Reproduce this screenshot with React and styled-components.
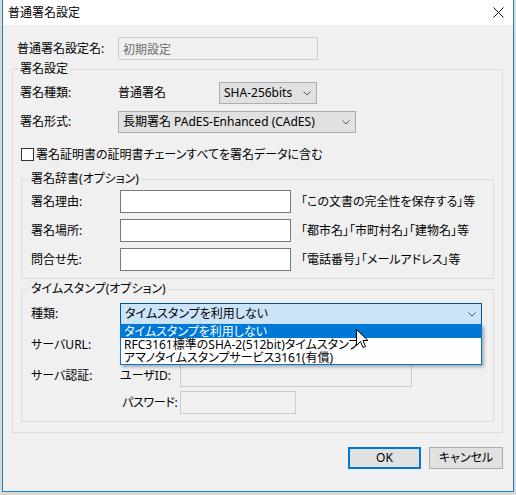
import { createGlobalStyle, styled } from "styled-components";

const GlobalStyle = createGlobalStyle`
  html, body {
    margin: 0;
    padding: 0;
    background: #d9d9d9;
  }
  body {
    font-family: "Noto Sans", "Noto Sans CJK JP", sans-serif;
    font-size: 12px;
    font-feature-settings: "palt";
    color: #000;
  }
`;

const Screen = styled.div`
  padding-left: 2px;
  height: 495px;
`;

const Window = styled.div`
  width: 512px;
  height: 492px;
  box-sizing: border-box;
  border: 1px solid #1883d7;
  border-top: none;
  background: #f0f0f0;
  display: flex;
  flex-direction: column;
`;

const TitleBar = styled.div`
  height: 25px;
  background: #fff;
  display: flex;
  align-items: center;
  padding-left: 5px;
`;

const Title = styled.span`
  flex: 1;
  line-height: 16px;
`;

const CloseBox = styled.div`
  width: 30px;
  height: 25px;
  display: flex;
  align-items: center;
  justify-content: center;
`;

const Body = styled.div`
  padding: 12px 10px 0 9px;
  display: flex;
  flex-direction: column;
`;

const Row = styled.div`
  display: flex;
  align-items: center;
  height: ${(p) => p.$h || 23}px;
  margin-top: ${(p) => p.$mt || 0}px;
  padding-left: ${(p) => p.$pl || 0}px;
`;

const Label = styled.span`
  width: ${(p) => p.$w}px;
  flex: none;
  white-space: nowrap;
  line-height: 16px;
  letter-spacing: ${(p) => p.$ls || 0}px;
`;

const Text = styled.span`
  white-space: nowrap;
  line-height: 16px;
  margin-left: ${(p) => p.$ml || 0}px;
`;

const Input = styled.div`
  box-sizing: border-box;
  width: ${(p) => p.$w}px;
  height: 23px;
  flex: none;
  border: 1px solid ${(p) => (p.$disabled ? "#cccccc" : "#7a7a7a")};
  background: ${(p) => (p.$disabled ? "#f0f0f0" : "#fff")};
  color: #6d6d6d;
  display: flex;
  align-items: center;
  padding-left: 4px;
`;

const Select = styled.div`
  box-sizing: border-box;
  width: ${(p) => p.$w}px;
  height: 22px;
  flex: none;
  border: 1px solid ${(p) => (p.$open ? "#005499" : "#adadad")};
  background: ${(p) => (p.$open ? "#cce4f7" : "#e1e1e1")};
  display: flex;
  align-items: center;
  padding: 0 5px 0 4px;
  white-space: nowrap;
`;

const SelectText = styled.span`
  flex: 1;
  line-height: 16px;
`;

const Group = styled.fieldset`
  margin: ${(p) => p.$mt || 0}px 0 0 ${(p) => p.$ml || 0}px;
  padding: ${(p) => p.$pad};
  border: 1px solid #dcdcdc;
  min-width: 0;
  display: flex;
  flex-direction: column;
`;

const Legend = styled.legend`
  padding: 0 2px;
  margin-left: -2px;
  line-height: 16px;
  white-space: nowrap;
`;

const CheckBox = styled.span`
  box-sizing: border-box;
  width: 13px;
  height: 13px;
  border: 1px solid #333;
  background: #fff;
  margin-left: 1px;
  flex: none;
`;

const DropWrap = styled.div`
  position: relative;
`;

const DropList = styled.div`
  position: absolute;
  left: 0;
  top: 21px;
  width: 362px;
  box-sizing: border-box;
  border: 1px solid #0078d7;
  background: #fff;
  box-shadow: 2px 2px 3px rgba(0, 0, 0, 0.3);
  z-index: 2;
`;

const DropItem = styled.div`
  height: 13px;
  line-height: 13px;
  padding-left: 3px;
  white-space: nowrap;
  background: ${(p) => (p.$active ? "#0078d7" : "#fff")};
  color: ${(p) => (p.$active ? "#fff" : "#000")};
`;

const Pointer = styled.svg`
  position: absolute;
  left: 236px;
  top: 26px;
  z-index: 3;
`;

const Buttons = styled.div`
  display: flex;
  justify-content: flex-end;
  gap: 8px;
  margin-top: 14px;
`;

const Button = styled.div`
  box-sizing: border-box;
  width: ${(p) => p.$w}px;
  height: 22px;
  background: #e1e1e1;
  border: ${(p) => (p.$primary ? "2px solid #0078d7" : "1px solid #adadad")};
  display: flex;
  align-items: center;
  justify-content: center;
  line-height: 16px;
`;

const Chevron = () => (
  <svg width="8" height="5" viewBox="0 0 8 5">
    <polyline points="0.5,0.5 4,4 7.5,0.5" fill="none" stroke="#555" strokeWidth="1" />
  </svg>
);

const timestampOptions = [
  "タイムスタンプを利用しない",
  "RFC3161標準のSHA-2(512bit)タイムスタンプ",
  "アマノタイムスタンプサービス3161(有償)",
];

const reasonRows = [
  { label: "署名理由:", hint: "「この文書の完全性を保存する」等" },
  { label: "署名場所:", hint: "「都市名」「市町村名」「建物名」等" },
  { label: "問合せ先:", hint: "「電話番号」「メールアドレス」等" },
];

export default function App() {
  return (
    <Screen>
      <GlobalStyle />
      <Window>
        <TitleBar>
          <Title>普通署名設定</Title>
          <CloseBox>
            <svg width="11" height="11" viewBox="0 0 11 11">
              <path d="M0.5 0.5 L10.5 10.5 M10.5 0.5 L0.5 10.5" stroke="#111" strokeWidth="1" />
            </svg>
          </CloseBox>
        </TitleBar>
        <Body>
          <Row $pl={5}>
            <Label $w={101}>普通署名設定名:</Label>
            <Input $w={200} $disabled>初期設定</Input>
          </Row>

          <Group $mt={1} $pad="5px 8px 10px 7px">
            <Legend>署名設定</Legend>
            <Row $h={22}>
              <Label $w={98}>署名種類:</Label>
              <Label $w={101}>普通署名</Label>
              <Select $w={98}>
                <SelectText>SHA-256bits</SelectText>
                <Chevron />
              </Select>
            </Row>
            <Row $h={22} $mt={7}>
              <Label $w={98}>署名形式:</Label>
              <Select $w={238}>
                <SelectText>長期署名 PAdES-Enhanced (CAdES)</SelectText>
                <Chevron />
              </Select>
            </Row>
            <Row $h={13} $mt={15}>
              <CheckBox />
              <Text $ml={2}>署名証明書の証明書チェーンすべてを署名データに含む</Text>
            </Row>

            <Group $mt={10} $ml={1} $pad="3px 8px 7px 9px">
              <Legend>署名辞書(オプション)</Legend>
              {reasonRows.map((r, i) => (
                <Row key={r.label} $mt={i ? 6 : 0}>
                  <Label $w={89}>{r.label}</Label>
                  <Input $w={171} />
                  <Text $ml={10}>{r.hint}</Text>
                </Row>
              ))}
            </Group>

            <Group $mt={2} $ml={1} $pad="6px 8px 7px 9px">
              <Legend>タイムスタンプ(オプション)</Legend>
              <Row $h={22}>
                <Label $w={89}>種類:</Label>
                <DropWrap>
                  <Select $w={362} $open>
                    <SelectText>タイムスタンプを利用しない</SelectText>
                    <Chevron />
                  </Select>
                  <DropList>
                    {timestampOptions.map((o, i) => (
                      <DropItem key={o} $active={i === 0}>
                        {o}
                      </DropItem>
                    ))}
                  </DropList>
                  <Pointer width="13" height="21" viewBox="0 0 13 21">
                    <path
                      d="M0.5 0.5 L0.5 16.5 L4.5 12.5 L7 18.5 L9.5 17.5 L7 11.5 L12 11.5 Z"
                      fill="#fff"
                      stroke="#000"
                      strokeWidth="1"
                      strokeLinejoin="round"
                    />
                  </Pointer>
                </DropWrap>
              </Row>
              <Row $mt={8}>
                <Label $w={89}>サーバURL:</Label>
                <Input $w={362} />
              </Row>
              <Row $mt={8}>
                <Label $w={89}>サーバ認証:</Label>
                <Label $w={60}>ユーザID:</Label>
                <Input $w={232} $disabled />
              </Row>
              <Row $mt={4} $pl={91}>
                <Label $w={58} $ls={-0.3}>パスワード:</Label>
                <Input $w={116} $disabled />
              </Row>
            </Group>
          </Group>

          <Buttons>
            <Button $w={73} $primary>OK</Button>
            <Button $w={74}>キャンセル</Button>
          </Buttons>
        </Body>
      </Window>
    </Screen>
  );
}
